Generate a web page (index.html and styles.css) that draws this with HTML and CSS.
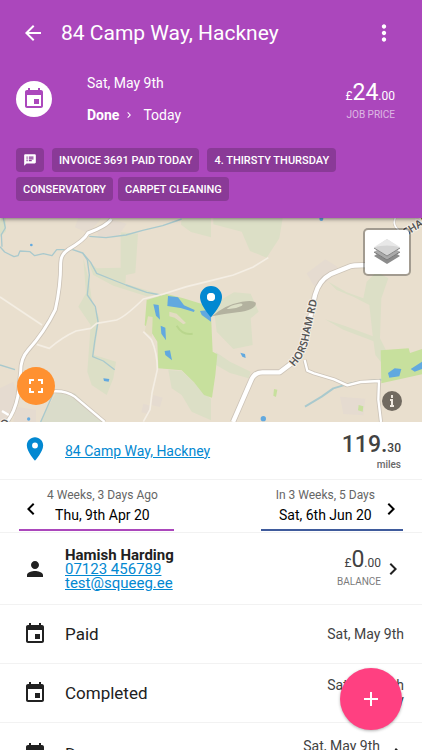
FILE: index.html
```html
<!DOCTYPE html>
<html lang="en">
<head>
  <meta charset="UTF-8" />
  <title>84 Camp Way, Hackney</title>
  <meta name="viewport" content="width=device-width, initial-scale=1.0" />
  <link rel="stylesheet" href="styles.css">
</head>
<body>
  <svg width="0" height="0" class="sprite" aria-hidden="true">
    <symbol id="i-event" viewBox="0 0 24 24">
      <path d="M17 12h-5v5h5v-5zM16 1v2H8V1H6v2H5c-1.11 0-1.99.9-1.99 2L3 19c0 1.1.89 2 2 2h14c1.1 0 2-.9 2-2V5c0-1.1-.9-2-2-2h-1V1h-2zm3 18H5V8h14v11z"/>
    </symbol>
    <symbol id="i-place" viewBox="0 0 24 24">
      <path d="M12 2C8.13 2 5 5.13 5 9c0 5.25 7 13 7 13s7-7.75 7-13c0-3.87-3.13-7-7-7zm0 9.5a2.5 2.5 0 0 1 0-5 2.5 2.5 0 0 1 0 5z"/>
    </symbol>
    <symbol id="i-right" viewBox="0 0 24 24">
      <path d="M10 6L8.59 7.41 13.17 12l-4.58 4.59L10 18l6-6z"/>
    </symbol>
    <symbol id="i-left" viewBox="0 0 24 24">
      <path d="M15.41 7.41L14 6l-6 6 6 6 1.41-1.41L10.83 12z"/>
    </symbol>
  </svg>

  <header class="header">
    <div class="app-bar">
      <button class="icon-btn" aria-label="Back">
        <svg class="icon" viewBox="0 0 24 24"><path d="M20 11H7.83l5.59-5.59L12 4l-8 8 8 8 1.41-1.41L7.83 13H20v-2z"/></svg>
      </button>
      <h1 class="title">84 Camp Way, Hackney</h1>
      <button class="icon-btn" aria-label="More">
        <svg class="icon icon-more" viewBox="0 0 24 24"><path d="M12 8c1.1 0 2-.9 2-2s-.9-2-2-2-2 .9-2 2 .9 2 2 2zm0 2c-1.1 0-2 .9-2 2s.9 2 2 2 2-.9 2-2-.9-2-2-2zm0 6c-1.1 0-2 .9-2 2s.9 2 2 2 2-.9 2-2-.9-2-2-2z"/></svg>
      </button>
    </div>

    <div class="job">
      <div class="job-avatar"><svg class="icon"><use href="#i-event"/></svg></div>
      <div class="job-info">
        <div>Sat, May 9th</div>
        <div class="job-status"><b>Done</b><svg class="status-arrow"><use href="#i-right"/></svg>Today</div>
      </div>
      <div class="amount">
        <div class="amount-value">£<span class="big">24</span>.00</div>
        <div class="amount-label">JOB PRICE</div>
      </div>
    </div>

    <div class="tags">
      <span class="tag tag-auto"><svg class="tag-icon" viewBox="0 0 24 24"><path d="M20 2H4c-1.1 0-2 .9-2 2v18l4-4h14c1.1 0 2-.9 2-2V4c0-1.1-.9-2-2-2zM8 14H6v-2h2v2zm0-3H6V9h2v2zm0-3H6V6h2v2zm7 6h-5v-2h5v2zm3-3h-8V9h8v2zm0-3h-8V6h8v2z"/></svg></span>
      <span class="tag tag-auto">INVOICE 3691 PAID TODAY</span>
      <span class="tag">4. THIRSTY THURSDAY</span>
      <span class="tag">CONSERVATORY</span>
      <span class="tag">CARPET CLEANING</span>
    </div>
  </header>

  <section class="map">
    <svg class="map-tiles" viewBox="0 9 1266 612" preserveAspectRatio="xMidYMid slice">
      <!-- fields and woods -->
      <g fill="#dcdfc6">
        <path d="M362 52L414 56L406 174L378 180L376 206L480 238L440 244L340 212L280 180L262 136L290 160L362 158z"/>
        <path d="M0 9h18v40L0 66z"/>
        <path d="M545 9h88v58l-60-16-30-22z"/>
        <path d="M640 9L848 9L838 70L800 128L750 108L725 50L640 28z"/>
        <path d="M250 130L268 200L276 260L298 310L282 420L348 440L340 490L320 540L275 510L262 470L272 330L235 275L258 235z"/>
        <path d="M505 465L545 468L590 510L633 552L633 616L575 590L545 540L515 520z"/>
        <path d="M640 268L702 232L752 236L776 290L752 310L758 390L700 402L650 350z"/>
        <path d="M648 412L690 440L752 470L746 490L690 474L648 450z"/>
        <path d="M985 200L1040 232L1090 250L1100 200L1130 170L1165 190L1144 250L1140 370L1170 430L1150 450L1126 420L1118 360L1108 270L1060 245L1010 225z"/>
        <path d="M975 313L1035 333L1125 366L1125 380L1030 344z"/>
      </g>
      <path d="M170 529l54 6 90 86H120z" fill="#dadcca"/>
      <g fill="#e5dbd0">
        <path d="M290 40l40-28 50 14-24 34-60 10zM235 9h70l-40 46-40-18z"/>
        <path d="M0 520l40-20 14 50-30 71H0zM48 575l60 10v36H40z"/>
        <path d="M920 175l56-42 36 22-30 44-40 14z"/>
        <path d="M460 540l28 8-8 28-26-6zM430 566l22 6-4 26-24-6z"/>
        <path d="M1020 545l76 6-6 50-60-4z"/>
      </g>

      <!-- park -->
      <path d="M440 255L500 237L550 250L633 275V300L638 410L652 418L646 480L636 548L612 540L598 522L582 502L545 466L475 460L472 380L450 345L434 330z" fill="#c7e09d"/>
      <path d="M1142 406L1226 400L1230 414L1266 402V478L1144 505z" fill="#c7e09d"/>
      <path d="M822 522l10 2-4 22-8-4zM1076 570l14 4-2 16-14-4z" fill="#c7e09d"/>
      <path d="M444 304l14 2-2 60-22-16zM508 290l22 6 28 28-8 4-26-20-16-4z" fill="#e3dcc2"/>
      <path d="M530 332q18 30 48 24" fill="none" stroke="#b9d68d" stroke-width="6"/>

      <!-- water -->
      <g fill="none" stroke="#a9c9cd" stroke-width="4" stroke-linejoin="round">
        <path d="M0 95L14 111L42 125L54 122L60 108L90 110L104 122L130 116L156 122L170 104L218 104L248 114L272 142L290 175L340 195L378 210L440 232L482 240"/>
        <path d="M248 114L262 135L268 180L262 240L286 275L294 320L284 380L278 425L310 438L344 464"/>
        <path d="M268 64L318 68L378 60L428 46L488 32L528 18L545 12"/>
        <path d="M10 9L16 39L4 59L6 95"/>
        <path d="M915 575L965 545L1000 520L1040 508L1080 500L1144 494" stroke-width="6"/>
        <path d="M160 535l-38 86M0 450l45 14"/>
      </g>
      <g fill="#62a9df">
        <path d="M504 243l30 4 18 24 32 14-2 6-40-12-40-6z"/>
        <path d="M460 268l16 2 4 44-12-12zM482 332l14 6 2 38-14-20zM494 408l16-2 6 30-20-16z"/>
        <path d="M600 288l33-4v36l-28-20z"/>
        <path d="M310 490l18 2-2 8-14-2z"/>
        <path d="M721 413l14 4 2 12-10-4zM1164 474l20-14 20 2-6 22-30 4zM1232 462l34-22v22l-22 8z"/>
        <circle cx="94" cy="90" r="4"/><circle cx="86" cy="612" r="5"/><circle cx="790" cy="611" r="8"/><circle cx="964" cy="12" r="6"/>
      </g>

      <!-- tracks -->
      <g fill="none" stroke="#f4eee4" stroke-width="5" stroke-linejoin="round">
        <path d="M0 246l126 84"/>
        <path d="M110 388L148 400Q188 366 228 348L272 340L290 325L350 315Q376 305 430 252L490 237L560 215L633 197L700 180L760 156L805 128"/>
        <path d="M430 350l24 24q18 40 18 90l-16 70-6 50-20 36"/>
      </g>

      <!-- roads -->
      <g fill="none" stroke-linejoin="round" stroke="#cdc4b8">
        <path d="M334 12q-12 20-70 42-12 22-60 50-22 14-22 40 0 70-16 140-32 66-82 122-22 24-22 64l-8 72q-10 50-34 80" stroke-width="14"/>
        <path d="M160 529q40-2 64 16l90 76" stroke-width="12"/>
        <path d="M699 621l54-124q10-25 34-25h52l42-32q30-24 36-70l28-130q12-44 46-62l60-24q10-4 50-3" stroke-width="18"/>
        <path d="M914 435l8 32 20 8 60 18 40 18 40-10 55-3-2 56 8 67" stroke-width="12"/>
        <path d="M1186 9q-10 20 10 36" stroke-width="8"/>
      </g>
      <g fill="none" stroke-linejoin="round" stroke="#fff">
        <path d="M334 12q-12 20-70 42-12 22-60 50-22 14-22 40 0 70-16 140-32 66-82 122-22 24-22 64l-8 72q-10 50-34 80" stroke-width="9"/>
        <path d="M160 529q40-2 64 16l90 76M6 588l20 12" stroke-width="7"/>
        <path d="M699 621l54-124q10-25 34-25h52l42-32q30-24 36-70l28-130q12-44 46-62l60-24q10-4 50-3" stroke-width="13"/>
        <path d="M914 435l8 32 20 8 60 18 40 18 40-10 55-3-2 56 8 67" stroke-width="7"/>
        <path d="M1186 9q-10 20 10 36" stroke-width="5"/>
      </g>

      <!-- road names -->
      <path id="horsham" d="M882 456q38-38 46-96l30-130" fill="none"/>
      <text class="road"><textPath href="#horsham">HORSHAM RD</textPath></text>
      <path id="sham" d="M1218 64l100-62" fill="none"/>
      <text class="road"><textPath href="#sham">SHAM</textPath></text>
      <text class="road" transform="translate(18 640) rotate(-60)">D</text>

      <!-- pin -->
      <path d="M636 304q36-34 90-44 40-6 42 6-2 18-56 26-40 4-76 12zm44-22q22 2 46-10 6-10-16-4-20 4-30 14z" fill="#918c80" fill-opacity=".55" fill-rule="evenodd"/>
      <path d="M633 213a33 33 0 0 0-33 33c0 25 33 61 33 61s33-36 33-61a33 33 0 0 0-33-33zm0 45a12 12 0 0 1 0-24 12 12 0 0 1 0 24z" fill="#0288d1"/>
      <circle cx="633" cy="246" r="12" fill="#fff"/>
    </svg>
    <button class="layers" aria-label="Layers">
      <svg class="layers-icon" viewBox="0 0 28 28">
        <path d="M1 18l13 8 13-8-3-2-10 6-10-6z" fill="#8c8c8c"/>
        <path d="M1 14l13 8 13-8-3-2-10 6-10-6z" fill="#aaa"/>
        <path d="M1 14l13 8 13-8" fill="none" stroke="#777"/>
        <path d="M14 1l13 9-13 8-13-8z" fill="#d4d4d4"/>
        <path d="M1 10l13 8 13-8" fill="none" stroke="#858585"/>
        <path d="M14 1l13 8q-13-3-26 0z" fill="#e8e8e8"/>
      </svg>
    </button>
    <button class="expand" aria-label="Full screen">
      <svg class="icon" viewBox="0 0 24 24"><path d="M5 5h5v2H7v3H5V5zm9 0h5v5h-2V7h-3V5zm3 9h2v5h-5v-2h3v-3zm-7 3v2H5v-5h2v3h3z"/></svg>
    </button>
    <button class="info" aria-label="Map info">
      <svg viewBox="0 0 20 20"><circle cx="10" cy="10" r="10" fill="#716a60"/><path d="M9 4h2v3H9zM8 8h3v6h1v2H8v-2h1v-4H8z" fill="#eee8df"/></svg>
    </button>
  </section>

  <main class="details">
    <section class="row address">
      <svg class="row-icon pin"><use href="#i-place"/></svg>
      <a class="link" href="#">84 Camp Way, Hackney</a>
      <div class="distance">
        <div class="distance-value"><span class="big">119.</span>30</div>
        <div class="distance-unit">miles</div>
      </div>
    </section>

    <nav class="row visits">
      <button class="visit">
        <svg class="icon"><use href="#i-left"/></svg>
        <span class="visit-text"><small>4 Weeks, 3 Days Ago</small>Thu, 9th Apr 20</span>
      </button>
      <button class="visit visit-next">
        <span class="visit-text"><small>In 3 Weeks, 5 Days</small>Sat, 6th Jun 20</span>
        <svg class="icon"><use href="#i-right"/></svg>
      </button>
    </nav>

    <section class="row contact">
      <svg class="row-icon" viewBox="0 0 24 24"><path d="M12 12c2.21 0 4-1.79 4-4s-1.79-4-4-4-4 1.79-4 4 1.79 4 4 4zm0 2c-2.67 0-8 1.34-8 4v2h16v-2c0-2.66-5.33-4-8-4z"/></svg>
      <div class="contact-info">
        <b>Hamish Harding</b>
        <a href="#">07123 456789</a>
        <a href="#">test@squeeg.ee</a>
      </div>
      <div class="amount balance">
        <div class="amount-value">£<span class="big">0</span>.00</div>
        <div class="amount-label">BALANCE</div>
      </div>
      <svg class="icon"><use href="#i-right"/></svg>
    </section>

    <section class="row event">
      <svg class="row-icon"><use href="#i-event"/></svg>
      <span class="event-name">Paid</span>
      <span class="event-date">Sat, May 9th</span>
    </section>
    <section class="row event">
      <svg class="row-icon"><use href="#i-event"/></svg>
      <span class="event-name">Completed</span>
      <span class="event-date">Sat, May 9th<br>Today</span>
    </section>
    <section class="row event event-link">
      <svg class="row-icon"><use href="#i-event"/></svg>
      <span class="event-name">Due</span>
      <span class="event-date">Sat, May 9th<br>Today</span>
      <svg class="icon"><use href="#i-right"/></svg>
    </section>
  </main>

  <button class="fab" aria-label="Add">
    <svg class="icon" viewBox="0 0 24 24"><path d="M19 13h-6v6h-2v-6H5v-2h6V5h2v6h6v2z"/></svg>
  </button>
</body>
</html>
```
FILE: styles.css
```css
* {
  box-sizing: border-box;
}

body {
  margin: 0;
  height: 100vh;
  display: flex;
  flex-direction: column;
  overflow: hidden;
  background: #fff;
  color: #212121;
  font-family: Roboto, sans-serif;
  font-size: 16px;
}

button {
  padding: 0;
  border: none;
  background: none;
  color: inherit;
  font: inherit;
  cursor: pointer;
}

a {
  color: #0288d1;
}

.sprite {
  position: absolute;
}

.icon {
  display: block;
  flex: none;
  width: 24px;
  height: 24px;
  fill: currentColor;
}

/* header */
.header {
  position: relative;
  z-index: 1;
  flex: none;
  padding: 5px 16px 17px;
  background: #ab47bc;
  color: #fff;
  box-shadow: 0 1px 4px rgba(0, 0, 0, 0.5);
}

.app-bar {
  display: flex;
  align-items: center;
  height: 56px;
  padding: 0 9px 0 5px;
}

.icon-more {
  width: 26px;
  height: 26px;
}

.title {
  flex: 1;
  margin: 0 0 0 16px;
  font-size: 21px;
  font-weight: 400;
}

.job {
  display: flex;
  align-items: center;
  height: 76px;
  margin-bottom: 11px;
}

.job-avatar {
  display: flex;
  align-items: center;
  justify-content: center;
  width: 36px;
  height: 36px;
  margin-right: 35px;
  border-radius: 50%;
  background: #fff;
  color: #ab47bc;
}

.job-info {
  flex: 1;
  font-size: 14px;
  line-height: 32px;
}

.job-status {
  display: flex;
  align-items: center;
}

.status-arrow {
  width: 12px;
  height: 12px;
  margin: 0 8px 0 4px;
  fill: currentColor;
}

.amount {
  padding: 4px 11px 0 0;
  text-align: right;
}

.amount-value {
  font-size: 12px;
  line-height: 24px;
}

.amount-value .big {
  font-size: 23px;
}

.amount-label {
  font-size: 10px;
  line-height: 14px;
  opacity: 0.6;
}

.tags {
  display: flex;
  flex-wrap: wrap;
  gap: 5px;
}

.tag {
  display: flex;
  align-items: center;
  height: 24px;
  padding: 0 7px;
  border-radius: 4px;
  background: #8a3a97;
  font-size: 11px;
  font-weight: 500;
}

.tag-auto {
  margin-right: 3px;
}

.tag-icon {
  width: 14px;
  height: 14px;
  fill: currentColor;
}

/* map */
.map {
  position: relative;
  flex: none;
  height: 204px;
  background: #e9dfce;
}

.map-tiles {
  display: block;
  width: 100%;
  height: 100%;
}

.road {
  font-family: "Noto Sans", sans-serif;
  font-size: 32px;
  font-weight: 600;
  fill: #555;
  stroke: #f4efe7;
  stroke-width: 6px;
  paint-order: stroke;
}

.layers,
.expand,
.info {
  position: absolute;
  display: flex;
  align-items: center;
  justify-content: center;
}

.layers {
  top: 10px;
  right: 11px;
  width: 48px;
  height: 48px;
  border: 2px solid rgba(0, 0, 0, 0.3);
  border-radius: 5px;
  background: #fff;
  background-clip: padding-box;
}

.layers-icon {
  width: 28px;
  height: 28px;
}

.expand {
  left: 17px;
  bottom: 17px;
  width: 38px;
  height: 38px;
  border-radius: 50%;
  background: #ff9130;
  color: #fff;
}

.info {
  right: 20px;
  bottom: 11px;
  width: 20px;
  height: 20px;
}

/* rows */
.row {
  display: flex;
  align-items: center;
  padding: 0 18px 0 23px;
  border-bottom: 1px solid #f2f2f2;
}

.row-icon {
  flex: none;
  width: 24px;
  height: 24px;
  margin-right: 18px;
  fill: currentColor;
}

.address {
  height: 58px;
}

.address .pin {
  width: 28px;
  height: 28px;
  margin: 0 16px 4px -2px;
  fill: #0288d1;
}

.link {
  flex: 1;
  font-size: 14px;
}

.distance {
  padding: 2px 3px 0 0;
  color: #424242;
  text-align: right;
}

.distance-value {
  font-size: 12px;
  font-weight: 500;
  line-height: 24px;
}

.distance-value .big {
  font-size: 23px;
}

.distance-unit {
  font-size: 10px;
  font-weight: 500;
  line-height: 10px;
  opacity: 0.8;
}

.visits {
  justify-content: space-between;
  height: 53px;
  padding: 0 19px;
}

.visit {
  display: flex;
  align-items: center;
  gap: 4px;
  height: 50px;
  padding-right: 16px;
  border-bottom: 2px solid #ab47bc;
  color: #000;
}

.visit-next {
  padding: 0 0 0 15px;
  border-color: #3f5b9c;
}

.visit .icon {
  margin-top: 8px;
}

.visit-text {
  font-size: 14px;
  line-height: 20px;
}

.visit-text small {
  display: block;
  color: #666;
  font-size: 12px;
}

.contact {
  height: 72px;
  padding-right: 17px;
}

.contact-info {
  flex: 1;
  display: flex;
  flex-direction: column;
  align-items: flex-start;
  font-size: 15px;
  line-height: 14px;
}

.balance {
  padding: 0;
}

.balance .amount-value {
  color: #424242;
}

.event {
  height: 59px;
}

.event-name {
  flex: 1;
  font-size: 17px;
}

.event-date {
  color: #424242;
  font-size: 14px;
  line-height: 15px;
  text-align: right;
}

.event-link {
  height: 62px;
}

.event-link .icon {
  margin: 0 -6px 0 6px;
}

.fab {
  position: fixed;
  right: 20px;
  bottom: 20px;
  display: flex;
  align-items: center;
  justify-content: center;
  width: 62px;
  height: 62px;
  border-radius: 50%;
  background: #ff4081;
  color: #fff;
  box-shadow: 0 1px 3px rgba(0, 0, 0, 0.3);
}
```
